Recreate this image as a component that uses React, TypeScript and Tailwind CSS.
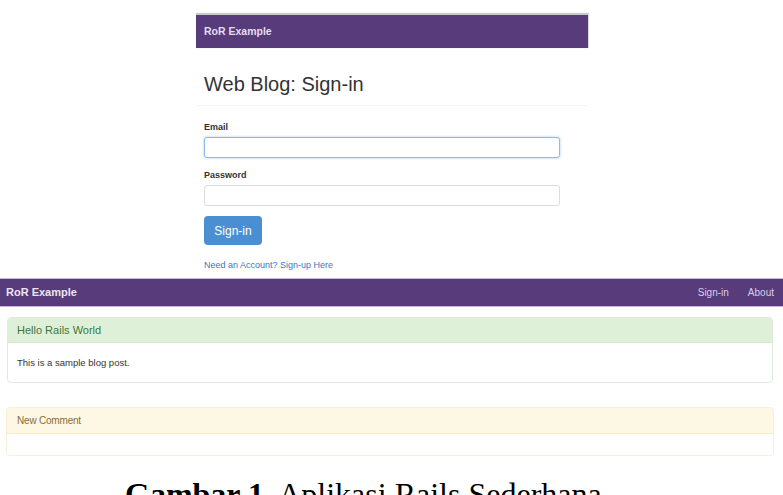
import React from "react";

function TopNav() {
  return (
    <nav className="h-[35px] bg-[#573b7b] border-t-2 border-[#c9c9c9] flex items-center pl-[8px] shadow-[1px_0_1px_rgba(0,0,0,0.15)]">
      <span className="text-[10.5px] font-bold text-[#e6ddf0] leading-none">RoR Example</span>
    </nav>
  );
}

function SignInForm() {
  return (
    <div className="pl-[8px]">
      <h1 className="mt-[26px] text-[20px] leading-none text-[#333333]">Web Blog: Sign-in</h1>
      <div className="mt-[11px] -ml-[8px] border-b border-[#f4f4f4]" />
      <label className="block mt-[17px] text-[9px] leading-none font-bold text-[#333333]">Email</label>
      <div className="mt-[5px] h-[21px] w-[356px] rounded-[3px] border border-[#8dbbe8] shadow-[0_0_3px_rgba(102,175,233,0.6)] bg-white" />
      <label className="block mt-[13px] text-[9px] leading-none font-bold text-[#333333]">Password</label>
      <div className="mt-[5px] h-[21px] w-[356px] rounded-[3px] border border-[#dcdcdc] bg-white" />
      <button className="mt-[10px] h-[29px] w-[58px] rounded-[4px] bg-[#4a8fd2] text-white text-[12px] leading-none flex items-center justify-center">
        Sign-in
      </button>
      <a className="block mt-[16px] text-[9px] leading-none text-[#3a78c2]">Need an Account? Sign-up Here</a>
    </div>
  );
}

function MainNav() {
  return (
    <nav className="mt-[8px] h-[29px] bg-[#573b7b] border-y border-[#c7b6dc] flex items-center justify-between pl-[6px] pr-[9px]">
      <span className="text-[11px] font-bold text-[#ece5f4] leading-none">RoR Example</span>
      <div className="flex items-center gap-[19px] text-[10px] leading-none text-[#d9cde8]">
        <span>Sign-in</span>
        <span>About</span>
      </div>
    </nav>
  );
}

export default function App() {
  return (
    <div className="w-[783px] h-[495px] overflow-hidden bg-white font-['Liberation_Sans',Arial,sans-serif]">
      <div className="pt-[13px] pl-[196px]">
        <div className="w-[392px]">
          <TopNav />
          <SignInForm />
        </div>
      </div>

      <MainNav />

      <section className="mt-[10px] ml-[7px] w-[766px] h-[66px] rounded-[4px] border border-[#e1ecd8] overflow-hidden flex flex-col">
        <div className="h-[25px] bg-[#dff0d8] border-b border-[#d6e9c6] flex items-center pl-[9px]">
          <span className="text-[11px] leading-none text-[#3c763d]">Hello Rails World</span>
        </div>
        <div className="flex-1 flex items-center pl-[9px]">
          <span className="text-[9.5px] leading-none text-[#333333]">This is a sample blog post.</span>
        </div>
      </section>

      <section className="mt-[24px] ml-[6px] w-[768px] h-[49px] rounded-[4px] border border-[#f7efd6] overflow-hidden flex flex-col">
        <div className="h-[26px] bg-[#fcf8e3] border-b border-[#f5ecd0] flex items-center pl-[10px]">
          <span className="text-[10px] leading-none text-[#8a6d3b] tracking-[-0.2px]">New Comment</span>
        </div>
        <div className="flex-1 bg-white" />
      </section>

      <p className="mt-[22px] pl-[125px] text-[32px] leading-none text-black whitespace-nowrap font-['Liberation_Serif','Times_New_Roman',serif]">
        <span className="font-bold">Gambar 1.</span> Aplikasi Rails Sederhana
      </p>
    </div>
  );
}
